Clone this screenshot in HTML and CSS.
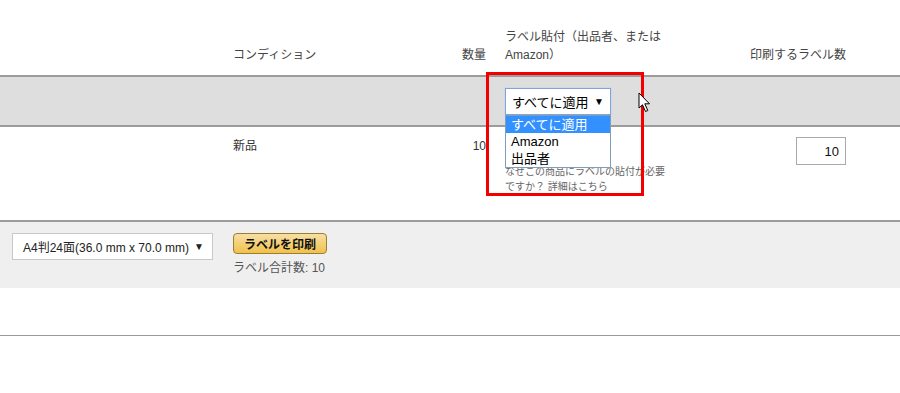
FILE: index.html
```html
<!DOCTYPE html>
<html lang="ja">
<head>
  <meta charset="UTF-8" />
  <title>ラベルの印刷</title>
  <link rel="stylesheet" href="styles.css">
</head>
<body>
  <div class="page">
    <div class="grid head">
      <div class="cell"></div>
      <div class="cell">コンディション</div>
      <div class="cell right">数量</div>
      <div class="cell label-col">ラベル貼付（出品者、または Amazon）</div>
      <div class="cell right">印刷するラベル数</div>
      <div class="cell"></div>
    </div>

    <div class="grid band">
      <div class="cell"></div>
      <div class="cell"></div>
      <div class="cell"></div>
      <div class="cell label-col">
        <div class="dropdown">
          <div class="fake-select focused">
            <span>すべてに適用</span><span class="arrow">▼</span>
          </div>
          <ul class="options">
            <li class="active">すべてに適用</li>
            <li>Amazon</li>
            <li>出品者</li>
          </ul>
        </div>
      </div>
      <div class="cell"></div>
      <div class="cell"></div>
    </div>

    <div class="grid item">
      <div class="cell"></div>
      <div class="cell">新品</div>
      <div class="cell right">10</div>
      <div class="cell label-col">
        <div class="fake-select covered">
          <span>Amazon</span><span class="arrow">▼</span>
        </div>
        <p class="note">なぜこの商品にラベルの貼付が必要ですか？ <a href="#">詳細はこちら</a></p>
      </div>
      <div class="cell right">
        <input class="count" type="text" value="10">
      </div>
      <div class="cell"></div>
    </div>

    <div class="footer">
      <div class="fake-select paper">
        <span>A4判24面(36.0 mm x 70.0 mm)</span><span class="arrow">▼</span>
      </div>
      <div class="print-box">
        <button class="print-btn">ラベルを印刷</button>
        <div class="total">ラベル合計数: 10</div>
      </div>
    </div>

    <div class="spacer"></div>

    <div class="highlight"></div>
    <svg class="cursor" width="13" height="21" viewBox="0 0 13 21">
      <path d="M1 1 L1 16 L4.5 12.8 L7.5 19.5 L9.8 18.5 L6.8 11.8 L11.5 11.8 Z" fill="#fff" stroke="#000" stroke-width="1" stroke-linejoin="round"/>
    </svg>
  </div>
</body>
</html>
```

FILE: styles.css
```css
* {
  box-sizing: border-box;
  margin: 0;
  padding: 0;
}

body {
  font-family: 'Liberation Sans', 'Noto Sans CJK JP', sans-serif;
  font-size: 12px;
  color: #333;
  background: #fff;
}

.page {
  position: relative;
  width: 900px;
  height: 393px;
  overflow: hidden;
}

.grid {
  display: grid;
  grid-template-columns: 233px 200px 53px 184px 176px 1fr;
}

.right {
  text-align: right;
}

.label-col {
  padding-left: 19px;
}

/* header */
.head {
  height: 77px;
  align-items: end;
  padding-bottom: 11px;
  border-bottom: 2px solid #9c9c9c;
  color: #444;
  line-height: 18px;
}

/* apply-to-all band */
.band {
  height: 50px;
  background: #dedede;
  border-bottom: 2px solid #9c9c9c;
  padding-top: 11px;
}

.dropdown {
  position: relative;
  width: 106px;
}

.fake-select {
  display: flex;
  justify-content: space-between;
  align-items: center;
  width: 106px;
  height: 27px;
  padding: 0 6px 0 6px;
  background: #fff;
  border: 1px solid #a6a6a6;
  font-size: 13px;
  color: #000;
}

.fake-select .arrow {
  font-size: 10px;
}

.fake-select.focused {
  border-color: #7ea6dc;
  box-shadow: 0 0 1px #9cc0ee;
}

.fake-select.covered {
  visibility: hidden;
}

.options {
  position: absolute;
  top: 27px;
  left: 0;
  width: 106px;
  list-style: none;
  background: #fff;
  border: 1px solid #7f9db9;
  font-size: 13px;
  color: #000;
  z-index: 2;
}

.options li {
  height: 17px;
  line-height: 17px;
  padding-left: 5px;
}

.options li.active {
  background: #3390ff;
  color: #fff;
}

/* item row */
.item {
  height: 95px;
  padding-top: 10px;
  border-bottom: 2px solid #9c9c9c;
  line-height: 18px;
}

.note {
  width: 165px;
  font-size: 10px;
  line-height: 15px;
  color: #666;
}

.note a {
  color: #666;
  text-decoration: none;
}

.count {
  width: 50px;
  height: 28px;
  border: 1px solid #aaa;
  padding-right: 6px;
  text-align: right;
  font-family: inherit;
  font-size: 13px;
  color: #111;
}

/* footer */
.footer {
  display: flex;
  gap: 20px;
  height: 66px;
  padding: 11px 0 0 12px;
  background: #efefef;
}

.paper {
  width: 201px;
  height: 27px;
  padding: 0 8px 0 10px;
  border-color: #c8c8c8;
  font-size: 12px;
  color: #222;
}

.print-btn {
  display: block;
  width: 94px;
  height: 21px;
  border: 1px solid #9c7e31;
  border-radius: 4px;
  background: linear-gradient(#f7dfa5, #f0c14b);
  font-family: inherit;
  font-size: 12px;
  font-weight: bold;
  color: #111;
}

.total {
  margin-top: 6px;
  line-height: 16px;
  color: #555;
}

.spacer {
  height: 48px;
  border-bottom: 1px solid #999;
}

/* annotation */
.highlight {
  position: absolute;
  left: 486px;
  top: 72px;
  width: 158px;
  height: 124px;
  border: 3px solid #f20000;
  z-index: 3;
  pointer-events: none;
}

.cursor {
  position: absolute;
  left: 638px;
  top: 92px;
  z-index: 4;
}
```
